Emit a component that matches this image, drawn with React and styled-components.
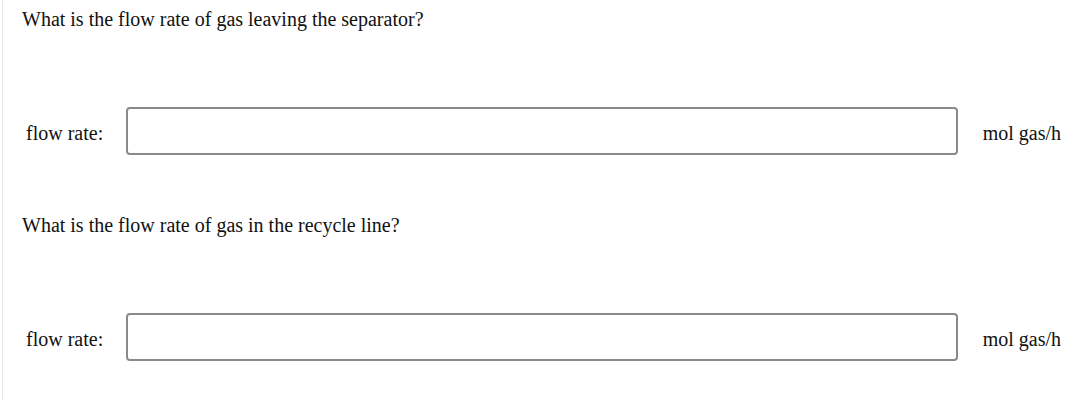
import React from "react";
import styled, { createGlobalStyle } from "styled-components";

const Global = createGlobalStyle`
  html, body { margin: 0; padding: 0; background: #fff; }
  body {
    font-family: "Liberation Serif", "Times New Roman", serif;
    color: #111;
  }
`;

const Page = styled.div`
  margin-left: 2px;
  border-left: 1px solid #e8e8e8;
  padding: 8px 17px 0 19px;
  min-height: 392px;
  display: flex;
  flex-direction: column;
`;

const Section = styled.section`
  display: flex;
  flex-direction: column;
  gap: 76px;
  padding-bottom: 59px;
`;

const Question = styled.p`
  margin: 0;
  font-size: 20px;
  line-height: 23px;
`;

const Row = styled.div`
  display: flex;
  align-items: center;
  padding-left: 4px;
`;

const Label = styled.label`
  width: 100px;
  flex: none;
  font-size: 20px;
  line-height: 23px;
  padding-top: 4px;
`;

const Field = styled.input`
  flex: 1;
  min-width: 0;
  height: 48px;
  box-sizing: border-box;
  border: 2px solid #8a8a8a;
  border-radius: 4px;
  background: #fff;
  font-family: inherit;
  font-size: 20px;
  padding: 0 10px;
  outline: none;
`;

const Unit = styled.span`
  flex: none;
  margin-left: 25px;
  font-size: 20px;
  line-height: 23px;
  padding-top: 4px;
`;

const items = [
  { id: "q1", question: "What is the flow rate of gas leaving the separator?" },
  { id: "q2", question: "What is the flow rate of gas in the recycle line?" },
];

export default function App() {
  return (
    <>
      <Global />
      <Page>
        {items.map((it) => (
          <Section key={it.id}>
            <Question>{it.question}</Question>
            <Row>
              <Label htmlFor={it.id}>flow rate:</Label>
              <Field id={it.id} type="text" />
              <Unit>mol gas/h</Unit>
            </Row>
          </Section>
        ))}
      </Page>
    </>
  );
}
